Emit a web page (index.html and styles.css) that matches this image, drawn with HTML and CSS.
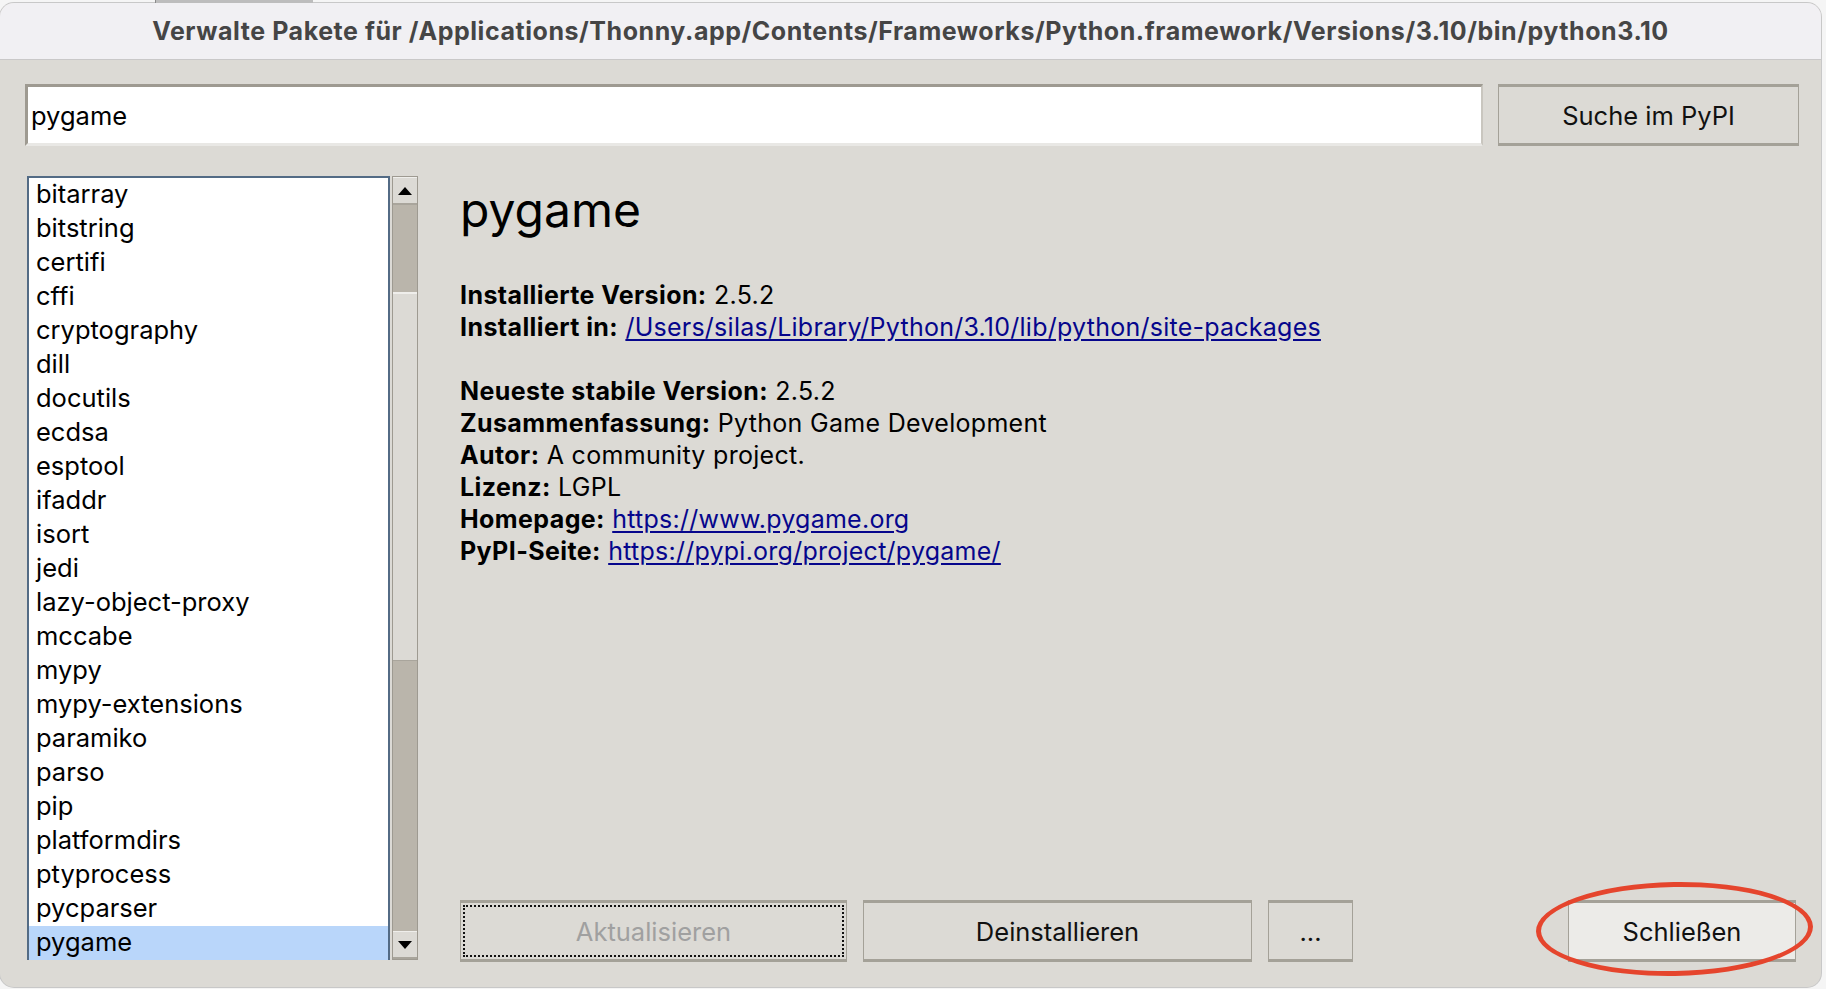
FILE: index.html
```html
<!doctype html>
<html lang="de">
<head>
    <meta charset="UTF-8">
    <title>Verwalte Pakete</title>
    <link rel="stylesheet" href="styles.css">
</head>
<body>
    <div class="behind">
        <div class="behind-tab"></div>
    </div>
    <div class="window">
        <div class="titlebar">Verwalte Pakete für /Applications/Thonny.app/Contents/Frameworks/Python.framework/Versions/3.10/bin/python3.10</div>
        <div class="content">
            <div class="search-row">
                <div class="entry">pygame</div>
                <div class="btn btn-search">Suche im PyPI</div>
            </div>
            <div class="main">
                <div class="listbox">
                    <div class="item">bitarray</div>
                    <div class="item">bitstring</div>
                    <div class="item">certifi</div>
                    <div class="item">cffi</div>
                    <div class="item">cryptography</div>
                    <div class="item">dill</div>
                    <div class="item">docutils</div>
                    <div class="item">ecdsa</div>
                    <div class="item">esptool</div>
                    <div class="item">ifaddr</div>
                    <div class="item">isort</div>
                    <div class="item">jedi</div>
                    <div class="item">lazy-object-proxy</div>
                    <div class="item">mccabe</div>
                    <div class="item">mypy</div>
                    <div class="item">mypy-extensions</div>
                    <div class="item">paramiko</div>
                    <div class="item">parso</div>
                    <div class="item">pip</div>
                    <div class="item">platformdirs</div>
                    <div class="item">ptyprocess</div>
                    <div class="item">pycparser</div>
                    <div class="item selected">pygame</div>
                </div>
                <div class="scrollbar">
                    <div class="arrow">
                        <svg width="14" height="8" viewBox="0 0 14 8"><polygon points="0,8 14,8 7,0" fill="#000"/></svg>
                    </div>
                    <div class="trough-top"></div>
                    <div class="thumb"></div>
                    <div class="trough-bottom"></div>
                    <div class="arrow">
                        <svg width="14" height="8" viewBox="0 0 14 8"><polygon points="0,0 14,0 7,8" fill="#000"/></svg>
                    </div>
                </div>
                <div class="detail">
                    <h1 class="pkg-name">pygame</h1>
                    <div class="info">
                        <div><b>Installierte Version:</b> 2.5.2</div>
                        <div><b>Installiert in:</b> <a href="#">/Users/silas/Library/Python/3.10/lib/python/site-packages</a></div>
                        <div class="gap"></div>
                        <div><b>Neueste stabile Version:</b> 2.5.2</div>
                        <div><b>Zusammenfassung:</b> Python Game Development</div>
                        <div><b>Autor:</b> A community project.</div>
                        <div><b>Lizenz:</b> LGPL</div>
                        <div><b>Homepage:</b> <a href="#">https://www.pygame.org</a></div>
                        <div><b>PyPI-Seite:</b> <a href="#">https://pypi.org/project/pygame/</a></div>
                    </div>
                    <div class="actions">
                        <div class="btn btn-update"><span class="focus">Aktualisieren</span></div>
                        <div class="btn btn-uninstall">Deinstallieren</div>
                        <div class="btn btn-more">...</div>
                        <div class="spacer"></div>
                        <div class="btn btn-close">Schließen<span class="circle"></span></div>
                    </div>
                </div>
            </div>
        </div>
    </div>
</body>
</html>
```
FILE: styles.css
```css
body{
    margin: 0;
    background: #f5f5f5;
    font-family: Inter, "Liberation Sans", sans-serif;
    width: 1826px;
    height: 989px;
    overflow: hidden;
}
.behind{
    height: 3px;
    display: flex;
}
.behind-tab{
    margin-left: 155px;
    width: 157px;
    background: #bdbdbd;
    border-left: 1px solid #8a8a8a;
}
.window{
    width: 1821px;
    height: 984px;
    background: #dcdad5;
    border-radius: 14px;
    overflow: hidden;
    display: flex;
    flex-direction: column;
    box-shadow: 0 0 0 1px #c8c8c8;
}
.titlebar{
    height: 56px;
    background: #f1f0f3;
    border-bottom: 1px solid #c9c8c8;
    display: flex;
    align-items: center;
    justify-content: center;
    font-weight: 700;
    font-size: 25px;
    color: #454545;
    letter-spacing: 0.55px;
}
.content{
    padding: 24px 22px 0 25px;
    display: flex;
    flex-direction: column;
}
.search-row{
    display: flex;
    height: 62px;
    gap: 15px;
}
.entry{
    flex: 1;
    background: #fff;
    border-top: 3px solid #9e9a91;
    border-left: 3px solid #9e9a91;
    border-bottom: 3px solid #e9e8e5;
    border-right: 2px solid #c9c6bf;
    font-size: 25.5px;
    display: flex;
    align-items: center;
    padding-left: 3px;
}
.btn{
    box-sizing: border-box;
    background: #dcdad5;
    border: 1px solid #a4a198;
    border-top: 3px solid #a4a198;
    border-bottom: 3px solid #a4a198;
    display: flex;
    align-items: center;
    justify-content: center;
    font-size: 25.5px;
    color: #111;
}
.btn-search{
    width: 301px;
}
.main{
    display: flex;
    margin-top: 30px;
    height: 784px;
}
.listbox{
    margin-left: 2px;
    width: 359px;
    border: 2px solid #536b85;
    background: #fff;
    display: flex;
    flex-direction: column;
}
.item{
    height: 34px;
    line-height: 32px;
    font-size: 25.5px;
    padding-left: 7px;
    color: #000;
    flex-shrink: 0;
}
.item.selected{
    background: #b9d6fa;
}
.scrollbar{
    margin-left: 2px;
    width: 26px;
    box-sizing: border-box;
    border: 1px solid #9e9a91;
    background: #bab5ab;
    display: flex;
    flex-direction: column;
}
.arrow{
    height: 25px;
    background: #dcdad5;
    border-top: 1px solid #efeeeb;
    border-bottom: 2px solid #a9a59c;
    display: flex;
    align-items: center;
    justify-content: center;
    flex-shrink: 0;
}
.trough-top{
    height: 87px;
}
.thumb{
    height: 369px;
    background: #dcdad5;
    border-top: 2px solid #efeeeb;
    border-bottom: 1px solid #a9a59c;
    box-sizing: border-box;
}
.trough-bottom{
    flex: 1;
}
.detail{
    flex: 1;
    padding-left: 42px;
    display: flex;
    flex-direction: column;
}
.pkg-name{
    margin: 4px 0 0 0;
    font-size: 48px;
    line-height: 60px;
    font-weight: 400;
    color: #000;
}
.info{
    margin-top: 39px;
    font-size: 25px;
    line-height: 32px;
    color: #000;
    letter-spacing: 0.3px;
}
.info b{
    font-weight: 700;
    letter-spacing: 0.4px;
}
.info a{
    color: #06068c;
    text-decoration: underline;
    text-underline-offset: 3px;
    letter-spacing: 0.25px;
}
.gap{
    height: 32px;
}
.actions{
    margin-top: auto;
    margin-bottom: -2px;
    height: 62px;
    display: flex;
    gap: 16px;
}
.btn-update{
    width: 387px;
    color: #a0a0a0;
    padding: 2px;
}
.focus{
    flex: 1;
    align-self: stretch;
    border: 2px dotted #111;
    display: flex;
    align-items: center;
    justify-content: center;
}
.btn-uninstall{
    width: 389px;
}
.btn-more{
    width: 85px;
}
.spacer{
    flex: 1;
}
.btn-close{
    width: 228px;
    margin-right: 3px;
    background: #ecebe8;
    position: relative;
}
.circle{
    position: absolute;
    left: -33px;
    top: -21px;
    width: 277px;
    height: 94px;
    border: 5px solid #e5452d;
    border-radius: 50%;
    box-sizing: border-box;
    transform: rotate(-1deg);
}
```
